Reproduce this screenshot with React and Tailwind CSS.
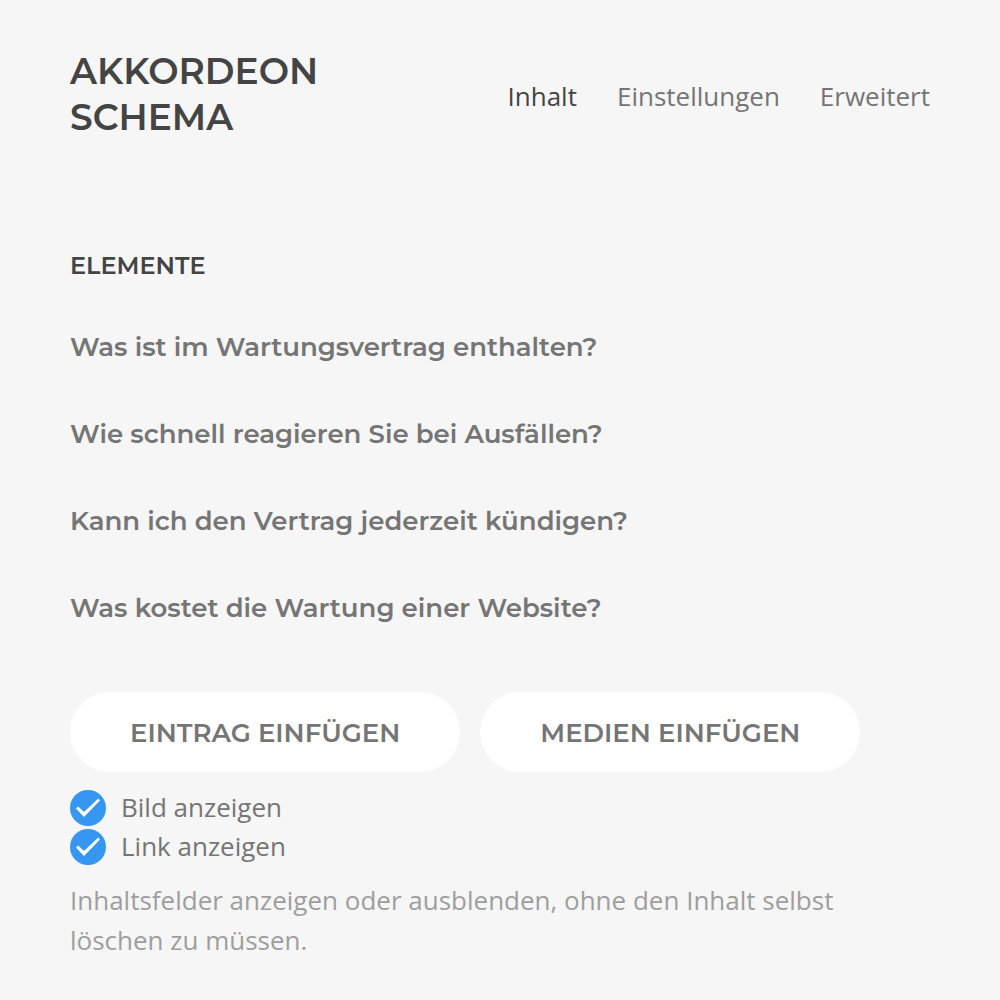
import React, { useState } from "react";

const tabs = ["Inhalt", "Einstellungen", "Erweitert"];

const items = [
  "Was ist im Wartungsvertrag enthalten?",
  "Wie schnell reagieren Sie bei Ausfällen?",
  "Kann ich den Vertrag jederzeit kündigen?",
  "Was kostet die Wartung einer Website?",
];

const ToggleOption = ({ id, label }) => {
  const [checked, setChecked] = useState(true);

  return (
    <div className="flex h-[39px] items-start gap-[15px]">
      <span className="relative mt-[3px] size-9 shrink-0">
        <input
          id={id}
          type="checkbox"
          checked={checked}
          onChange={() => setChecked(!checked)}
          className="block size-9 appearance-none rounded-full bg-white checked:bg-[#3697f3]"
        />
        {checked && (
          <svg
            viewBox="0 0 36 36"
            className="pointer-events-none absolute inset-0 size-9"
            fill="white"
          >
            <path d="M6 18.6L8.2 16.4L14 22L28.2 8.6L30 10.4L14 27Z" />
          </svg>
        )}
      </span>
      <label htmlFor={id}>{label}</label>
    </div>
  );
};

const App = () => {
  const [activeTab, setActiveTab] = useState("Inhalt");

  return (
    <div className="min-h-screen bg-[#f6f6f6] px-[70px] pt-12 pb-10 font-['Open_Sans',sans-serif] text-[26px] leading-10 text-[#757575]">
      <header className="flex items-center justify-between">
        <h1 className="w-min font-['Montserrat','Open_Sans',sans-serif] text-4xl leading-[46px] font-semibold text-[#444444]">
          AKKORDEON SCHEMA
        </h1>
        <nav className="flex gap-10 pt-1">
          {tabs.map((tab) => (
            <button
              key={tab}
              type="button"
              onClick={() => setActiveTab(tab)}
              className={activeTab === tab ? "text-[#444444]" : "text-[#757575]"}
            >
              {tab}
            </button>
          ))}
        </nav>
      </header>

      <main className="mt-[106px]">
        <h2 className="font-['Montserrat','Open_Sans',sans-serif] text-2xl leading-10 font-semibold text-[#444444]">
          ELEMENTE
        </h2>
        <ul className="mt-[41px] flex flex-col gap-[47px] font-['Montserrat','Open_Sans',sans-serif] text-[26px] font-semibold">
          {items.map((item) => (
            <li key={item}>
              <button type="button">{item}</button>
            </li>
          ))}
        </ul>
        <div className="mt-16 flex gap-5 font-['Montserrat','Open_Sans',sans-serif] text-[26px] font-semibold">
          <button type="button" className="h-20 rounded-full bg-white px-15 pt-0.5">
            EINTRAG EINFÜGEN
          </button>
          <button type="button" className="h-20 rounded-full bg-white px-15 pt-0.5">
            MEDIEN EINFÜGEN
          </button>
        </div>
        <div className="mt-[15px]">
          <ToggleOption id="show-image" label="Bild anzeigen" />
          <ToggleOption id="show-link" label="Link anzeigen" />
        </div>
        <p className="mt-[15px] max-w-[800px] text-[#9e9e9e]">
          Inhaltsfelder anzeigen oder ausblenden, ohne den Inhalt selbst
          löschen zu müssen.
        </p>
      </main>
    </div>
  );
};

export default App;
